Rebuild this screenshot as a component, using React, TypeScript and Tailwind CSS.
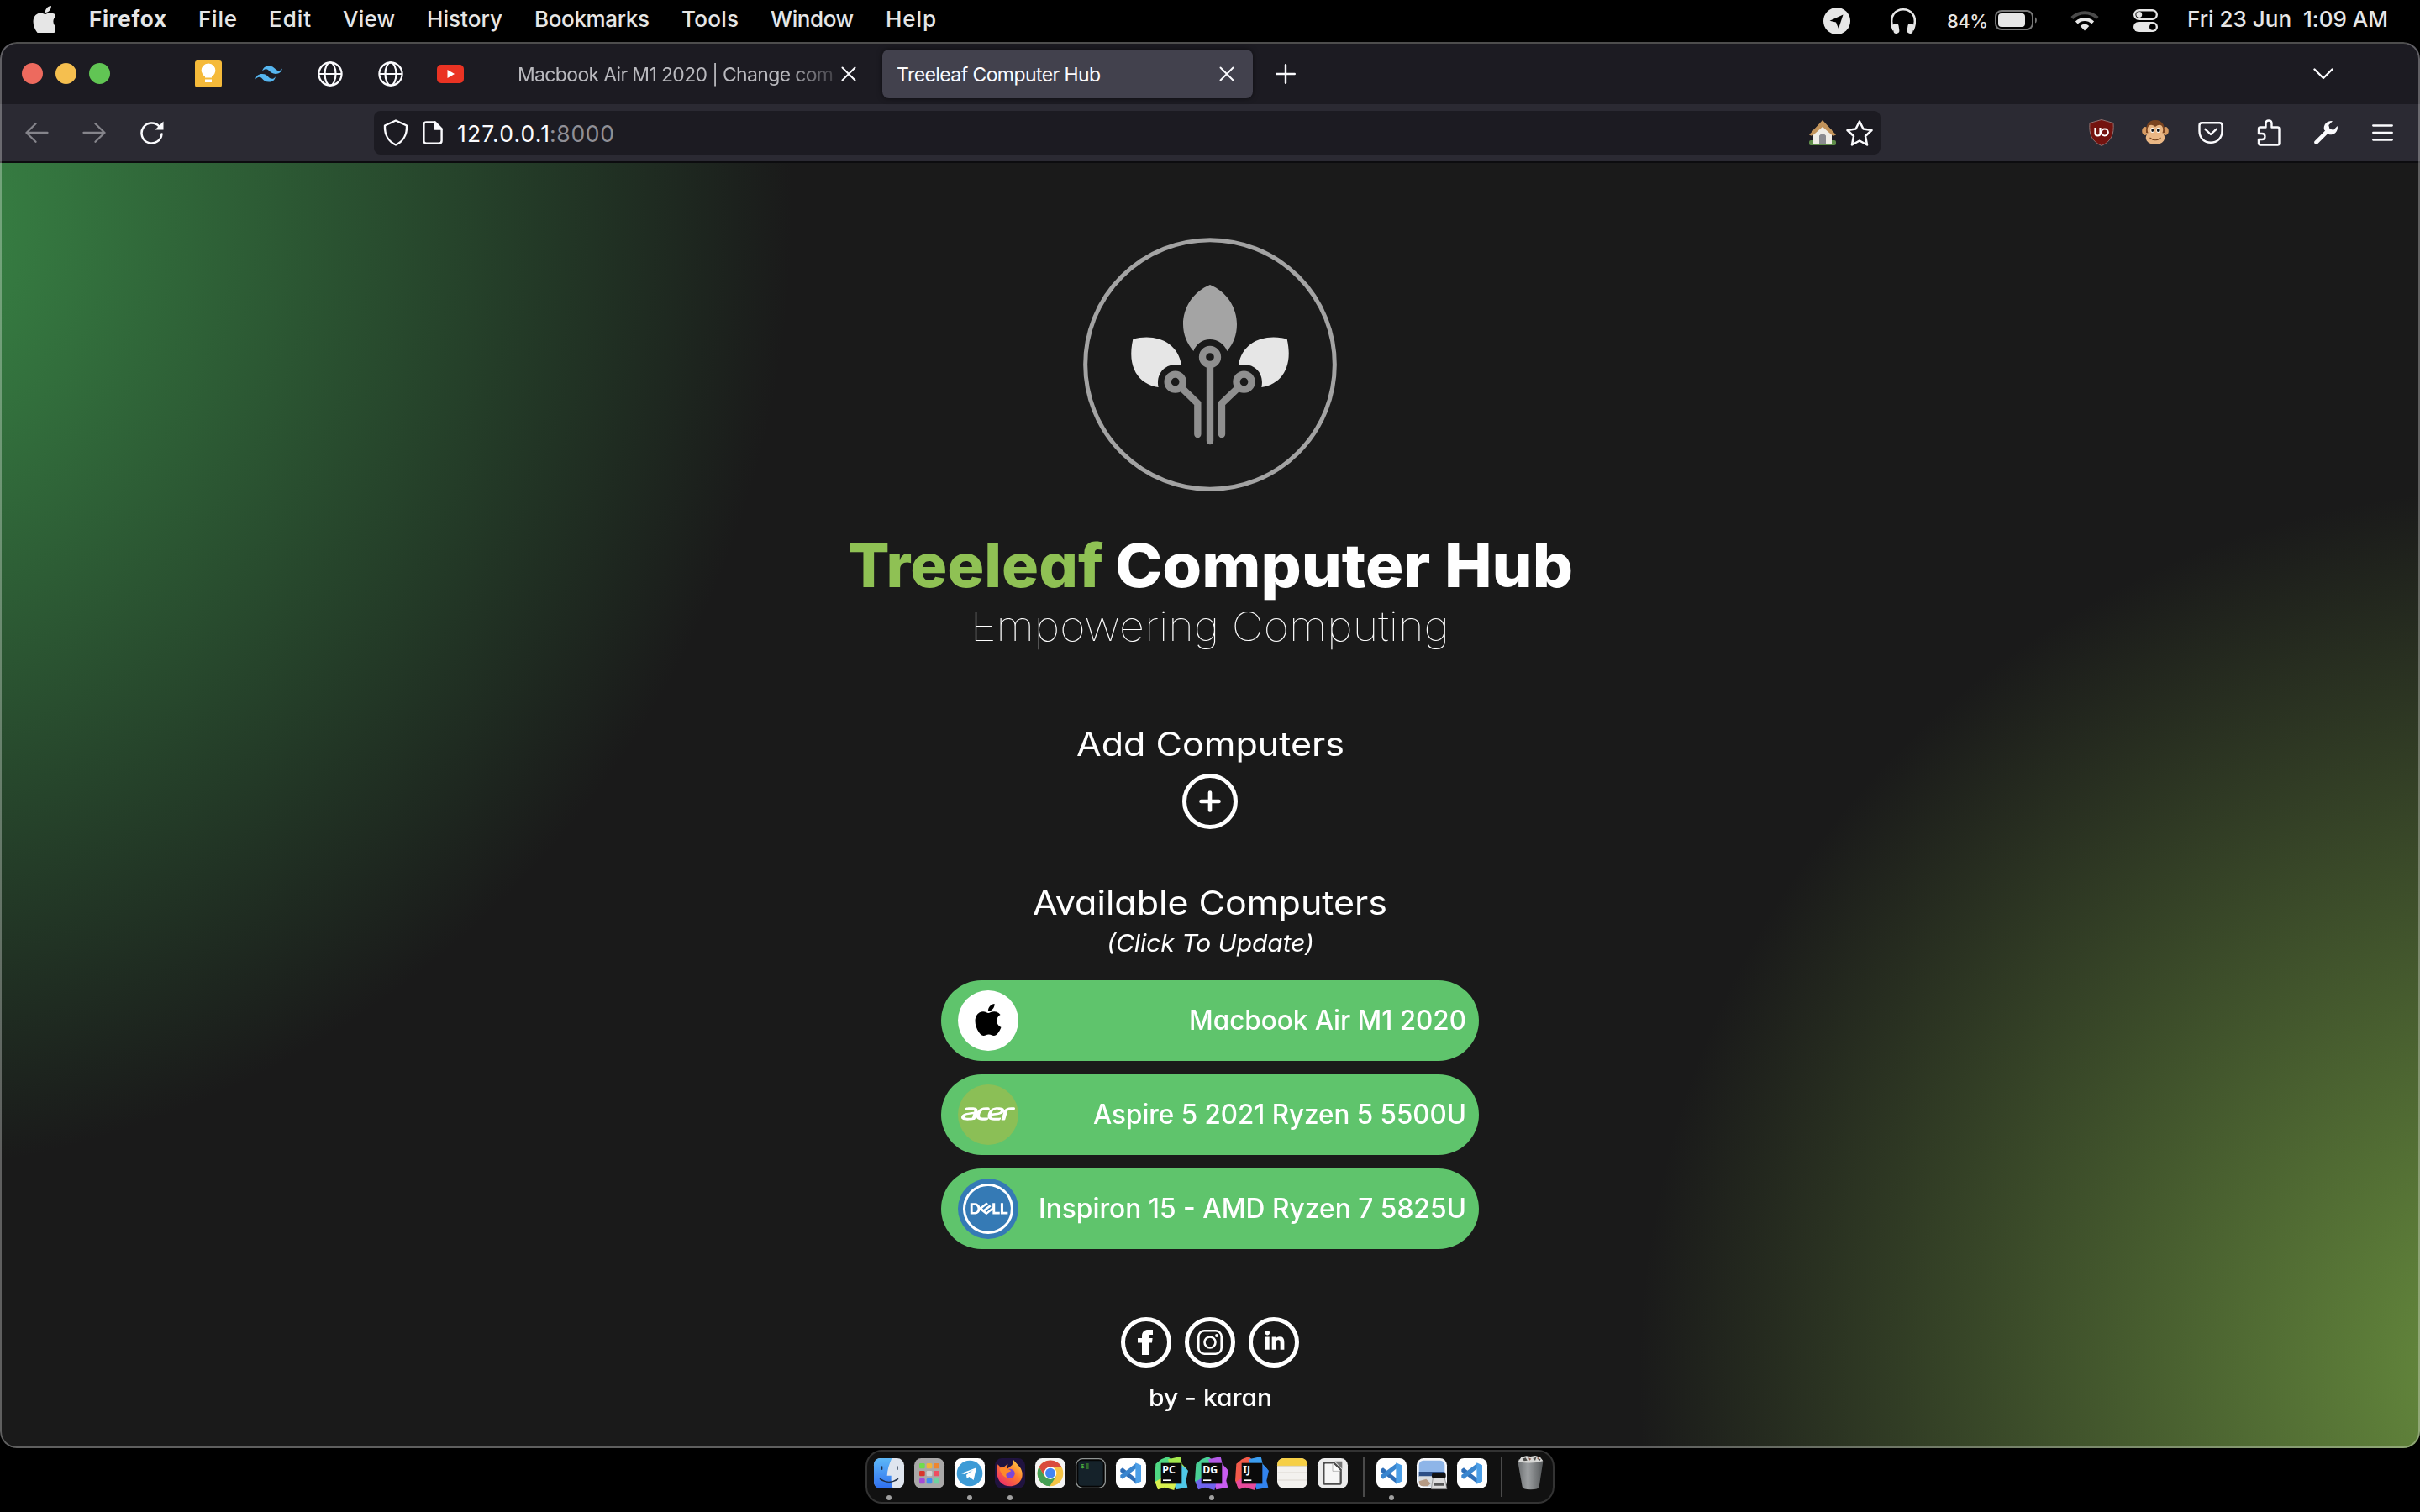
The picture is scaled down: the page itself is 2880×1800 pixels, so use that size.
import { useLayoutEffect, useRef, useState, type ReactNode } from "react";
import { SiAcer, SiApple, SiDell, SiTailwindcss } from "react-icons/si";
import { FaLinkedinIn } from "react-icons/fa";

/** Text whose tracking is adjusted so that it spans exactly `w` pixels. */
function Fit({ w, className = "", children }: { w: number; className?: string; children: string }) {
  const ref = useRef<HTMLSpanElement>(null);
  const [ls, setLs] = useState<number | null>(null);
  useLayoutEffect(() => {
    if (ref.current && ls === null) {
      const natural = ref.current.getBoundingClientRect().width;
      setLs((w - natural) / Math.max(1, children.length - 1));
    }
  }, [w, children, ls]);
  return (
    <span
      ref={ref}
      className={`inline-block whitespace-pre ${className}`}
      style={ls === null ? undefined : { letterSpacing: ls, marginRight: -ls }}
    >
      {children}
    </span>
  );
}

/** Text whose letterforms are widened so that it spans exactly `w` pixels. */
function Wide({ w, className = "", children }: { w: number; className?: string; children: string }) {
  const ref = useRef<HTMLSpanElement>(null);
  const [scale, setScale] = useState<number | null>(null);
  useLayoutEffect(() => {
    if (ref.current && scale === null) {
      setScale(w / ref.current.getBoundingClientRect().width);
    }
  }, [w, scale]);
  return (
    <span className={`block ${className}`} style={{ width: w }}>
      <span
        ref={ref}
        className="inline-block origin-left whitespace-pre"
        style={scale === null ? undefined : { transform: `scaleX(${scale})` }}
      >
        {children}
      </span>
    </span>
  );
}

const menus: [string, number][] = [
  ["File", 46],
  ["Edit", 50],
  ["View", 62],
  ["History", 90],
  ["Bookmarks", 137],
  ["Tools", 68],
  ["Window", 99],
  ["Help", 60],
];

function MenuBar() {
  return (
    <header className="flex h-[50px] items-start justify-between pl-[39px] pr-[38px] text-[26px] leading-[46px] text-[#e6e6e6]">
      <div className="flex h-[46px] items-center">
        <svg viewBox="2 0 20 24" preserveAspectRatio="none" className="mr-[40px] h-[32px] w-[27px] fill-current">
          <SiApple />
        </svg>
        <div className="flex gap-[38px]">
          <Fit w={92} className="font-bold">Firefox</Fit>
          {menus.map(([m, w]) => (
            <Fit key={m} w={w} className="font-medium">{m}</Fit>
          ))}
        </div>
      </div>
      <div className="flex h-[46px] items-center">
        <svg viewBox="0 0 32 32" className="mt-[3px] h-8 w-8">
          <circle cx="16" cy="16" r="16" fill="#e6e6e6" />
          <path d="M7.5 15.8 23.5 8.5 18 25 15 17.5Z" fill="#000" />
        </svg>
        <svg viewBox="0 0 30 32" className="ml-[48px] mt-[3px] h-8 w-[30px]">
          <path d="M3.5 27C-4 8 8 2.3 15 2.3S34 8 26.500 27" fill="none" stroke="#e6e6e6" strokeWidth="2.6" />
          <rect x="3" y="19" width="7" height="12" rx="3.3" fill="#e6e6e6" transform="rotate(-8 6 25)" />
          <rect x="20" y="19" width="7" height="12" rx="3.3" fill="#e6e6e6" transform="rotate(8 24 25)" />
        </svg>
        <Fit w={49} className="ml-[37px] mt-[3px] text-[22px] font-medium">84%</Fit>
        <svg viewBox="0 0 52 24" className="ml-[8px] mt-[2px] h-6 w-[52px]">
          <rect x="1" y="1" width="44" height="22" rx="7" fill="none" stroke="#777" strokeWidth="2" />
          <rect x="4" y="4" width="32" height="16" rx="4" fill="#e6e6e6" />
          <path d="M48 8.500C50.500 9.500 50.500 14.500 48 15.500Z" fill="#777" />
        </svg>
        <svg viewBox="0 0 34 25" className="ml-[38px] mt-[2px] h-[25px] w-[34px]" fill="none" strokeWidth="4">
          <path d="M1.800 9.500a21.500 21.500 0 0 1 30.400 0" stroke="#4a4a4a" />
          <path d="M7.300 15a13.700 13.700 0 0 1 19.400 0" stroke="#e6e6e6" />
          <path d="M17 24.500 11.700 19a7.500 7.500 0 0 1 10.600 0Z" fill="#e6e6e6" />
        </svg>
        <svg viewBox="0 0 29 27" className="ml-[41px] mt-[2px] h-[27px] w-[29px]">
          <rect x="1.200" y="1.200" width="26.600" height="10.600" rx="5.300" fill="none" stroke="#e6e6e6" strokeWidth="2.400" />
          <circle cx="6.800" cy="6.500" r="3.400" fill="#e6e6e6" />
          <rect y="15" width="29" height="12" rx="6" fill="#e6e6e6" />
          <circle cx="22.800" cy="21" r="3.800" fill="#000" />
        </svg>
        <Fit w={239} className="ml-[35px] font-medium">Fri 23 Jun  1:09 AM</Fit>
      </div>
    </header>
  );
}

function Globe() {
  return (
    <svg viewBox="0 0 30 30" className="h-[30px] w-[30px]" fill="none" stroke="#fbfbfe" strokeWidth="2.200">
      <circle cx="15" cy="15" r="13.600" />
      <ellipse cx="15" cy="15" rx="6.500" ry="13.600" />
      <path d="M1.500 15H28.500" />
    </svg>
  );
}

function Cross() {
  return (
    <svg viewBox="0 0 18 18" className="h-[18px] w-[18px] shrink-0" fill="none" stroke="#fbfbfe" strokeWidth="2" strokeLinecap="round">
      <path d="M1.500 1.500 16.500 16.500M16.500 1.500 1.500 16.500" />
    </svg>
  );
}

function TabStrip() {
  return (
    <div className="flex h-[72px] items-center bg-[#1c1b22] pl-[26px]">
      <div className="flex w-[206px] gap-[15px] pb-[2px]">
        <i className="h-[25px] w-[25px] rounded-full bg-[#ed6a5e]" />
        <i className="h-[25px] w-[25px] rounded-full bg-[#f5bf4f]" />
        <i className="h-[25px] w-[25px] rounded-full bg-[#61c554]" />
      </div>
      <div className="flex items-center">
        <svg viewBox="0 0 32 32" className="h-8 w-8">
          <rect width="32" height="32" rx="3" fill="#f5ba3a" />
          <path d="M12 20.500V19a8.300 8.300 0 1 1 8 0V20.500ZM12 22.500h8v3.500h-8Z" fill="#fff" />
        </svg>
        <SiTailwindcss className="ml-[40px] h-8 w-8 text-[#56b6f0]" />
        <div className="ml-[42px] flex gap-[42px]">
          <Globe />
          <Globe />
        </div>
        <svg viewBox="0 0 32 22" className="ml-[40px] h-[22px] w-8">
          <rect width="32" height="22" rx="5" fill="#ea3323" />
          <path d="M12.500 6 21 11 12.500 16Z" fill="#fff" />
        </svg>
      </div>
      <div className="ml-[64px] flex w-[403px] items-center">
        <div className="w-[379px] pt-[2px] text-[23px] leading-8 text-[#b9b9be] [mask-image:linear-gradient(to_right,#000_84%,#0003_100%)]">
          <Fit w={376}>Macbook Air M1 2020 | Change com</Fit>
        </div>
        <div className="ml-[6px]"><Cross /></div>
      </div>
      <div className="ml-[31px] flex h-[58px] w-[441px] items-center justify-between rounded-lg bg-[#42414d] pl-[17px] pr-[22px] shadow-[0_0_6px_#0008]">
        <Fit w={243} className="pt-[2px] text-[23px] leading-8 text-[#fbfbfe]">Treeleaf Computer Hub</Fit>
        <Cross />
      </div>
      <svg viewBox="0 0 24 24" className="ml-[27px] h-6 w-6" fill="none" stroke="#fbfbfe" strokeWidth="2.400" strokeLinecap="round">
        <path d="M12 1.200V22.800M1.200 12H22.800" />
      </svg>
      <svg viewBox="0 0 24 14" className="ml-auto mr-[103px] h-[14px] w-6" fill="none" stroke="#fbfbfe" strokeWidth="2.400" strokeLinecap="round" strokeLinejoin="round">
        <path d="M1.500 1.500 12 12 22.500 1.500" />
      </svg>
    </div>
  );
}

function Toolbar() {
  return (
    <div className="flex h-[68px] items-center bg-[#2b2a33] pl-[30px]">
      <svg viewBox="0 0 28 24" className="h-6 w-7" fill="none" stroke="#85848b" strokeWidth="2.300" strokeLinecap="round" strokeLinejoin="round">
        <path d="M12.500 1.200 1.500 12 12.500 22.800M1.500 12H26.500" />
      </svg>
      <svg viewBox="0 0 28 24" className="ml-[40px] h-6 w-7" fill="none" stroke="#85848b" strokeWidth="2.300" strokeLinecap="round" strokeLinejoin="round">
        <path d="M15.500 1.200 26.500 12 15.500 22.800M26.500 12H1.500" />
      </svg>
      <svg viewBox="0 0 30 30" className="ml-[40px] h-[30px] w-[30px]">
        <path d="M26.500 16.500A12 12 0 1 1 23.500 7.500" fill="none" stroke="#fbfbfe" strokeWidth="2.500" strokeLinecap="round" />
        <path d="M28.500 1.500V11.500H18.500Z" fill="#fbfbfe" />
      </svg>
      <div className="ml-[249px] flex h-[52px] w-[1793px] items-center rounded-lg bg-[#1c1b22] pl-[11px] pr-[9px]">
        <svg viewBox="0 0 30 32" className="h-8 w-[30px]" fill="none" stroke="#fbfbfe" strokeWidth="2.400" strokeLinejoin="round">
          <path d="M15 1.500 28 7.500C28.500 19 23 27 15 30.500 7 27 1.500 19 2 7.500Z" />
        </svg>
        <svg viewBox="0 0 24 28" className="ml-[17px] h-7 w-6" fill="none" stroke="#fbfbfe" strokeWidth="2.400" strokeLinejoin="round">
          <path d="M4.500 1.400H14.500L22.600 9.500V23.500Q22.600 26.600 19.500 26.600H4.500Q1.400 26.600 1.400 23.500V4.500Q1.400 1.400 4.500 1.400Z" />
          <path d="M14.500 1.400V9.500H22.600Z" fill="#fbfbfe" />
        </svg>
        <div className="ml-[17px] pt-px text-[26.500px] leading-10">
          <Fit w={110} className="text-[#fbfbfe]">127.0.0.1</Fit>
          <Fit w={77} className="text-[#8f8f96]">:8000</Fit>
        </div>
        <svg viewBox="0 0 32 31" className="ml-auto h-[31px] w-8">
          <rect y="24" width="32" height="6" rx="2" fill="#5f8d4a" />
          <path d="M5 12 16 3 27 12V28H5Z" fill="#efece6" />
          <path d="M0 17.500 16 0 32 17.500 28.500 19 16 8 3.500 19Z" fill="#c2935a" />
          <path d="M12 28V18.500Q16 14 20 18.500V28Z" fill="#8b8b90" />
        </svg>
        <svg viewBox="0 0 32 31" className="ml-[12px] h-[31px] w-8" fill="none" stroke="#fbfbfe" strokeWidth="2.500" strokeLinejoin="round">
          <path d="M16 1.500 20.500 10.500 30.500 12 23 19 25 29.500 16 24.500 7 29.500 9 19 1.500 12 11.500 10.500Z" />
        </svg>
      </div>
      <div className="ml-auto mr-[32px] flex items-center">
        <svg viewBox="0 0 30 32" className="h-8 w-[30px]">
          <path d="M15 .5 29 4.500C30 18 27 26 15 31.500 3 26 0 18 1 4.500Z" fill="#74130f" stroke="#92706f" strokeWidth="1" />
          <path d="M7.500 10V16.500Q7.500 19.500 10.500 19.500 13.500 19.500 13.500 16.500V10" fill="none" stroke="#fff" strokeWidth="2.200" />
          <circle cx="18.800" cy="15.500" r="4" fill="none" stroke="#fff" strokeWidth="2.200" />
        </svg>
        <svg viewBox="0 0 32 30" className="ml-[33px] h-[30px] w-8">
          <ellipse cx="3.800" cy="13" rx="3.600" ry="5" fill="#d79b62" />
          <ellipse cx="28.200" cy="13" rx="3.600" ry="5" fill="#d79b62" />
          <path d="M16 0C7 0 4.500 7 5 15H27C27.500 7 25 0 16 0Z" fill="#7a4420" />
          <path d="M16 8C9 2 5 9 7.500 15 1 22 7 29 16 29S31 22 24.500 15C27 9 23 2 16 8Z" fill="#eab785" />
          <ellipse cx="12.500" cy="12" rx="2.200" ry="3" fill="#fff" />
          <ellipse cx="19.500" cy="12" rx="2.200" ry="3" fill="#fff" />
          <ellipse cx="12.700" cy="12" rx="1.400" ry="2.100" fill="#111" />
          <ellipse cx="19.300" cy="12" rx="1.400" ry="2.100" fill="#111" />
          <path d="M9.500 21Q16 26.500 22.500 21" fill="none" stroke="#77451f" strokeWidth="1.200" />
        </svg>
        <svg viewBox="0 0 30 26" className="ml-[35px] h-[26px] w-[30px]" fill="none" stroke="#fbfbfe" strokeWidth="2.400" strokeLinecap="round" strokeLinejoin="round">
          <path d="M4.500 1.300H25.500Q28.500 1.300 28.500 4.500V11C28.500 19.500 22.500 24.700 15 24.700S1.500 19.500 1.500 11V4.500Q1.500 1.300 4.500 1.300Z" />
          <path d="M8.500 8.800 15 15 21.500 8.800" />
        </svg>
        <svg viewBox="0 0 28 32" className="ml-[40px] h-8 w-7" fill="none" stroke="#fbfbfe" strokeWidth="2.400" strokeLinejoin="round">
          <path d="M2 17V11.500Q2 9.500 4 9.500H10.500V5Q10.500 1.500 14 1.500T17.500 5V9.500H24.500Q26.500 9.500 26.500 11.500V28.500Q26.500 30.500 24.500 30.500H4Q2 30.500 2 28.500V24H6Q9.500 24 9.500 20.500T6 17Z" />
        </svg>
        <svg viewBox="0 0 28 28" className="ml-[40px] h-7 w-7">
          <path d="M2.500 25.500 16 12" stroke="#fbfbfe" strokeWidth="4.600" strokeLinecap="round" />
          <path d="M22 .3A8.300 8.300 0 0 0 12 10.500L17.500 16A8.300 8.300 0 0 0 27.700 6L23 10.700 18.500 9.500 17.300 5Z" fill="#fbfbfe" />
        </svg>
        <svg viewBox="0 0 25 20" className="ml-[41px] h-5 w-[25px]" stroke="#fbfbfe" strokeWidth="2.300" strokeLinecap="round">
          <path d="M1.200 1.500H23.800M1.200 10H23.800M1.200 18.500H23.800" />
        </svg>
      </div>
    </div>
  );
}

function TreeleafLogo() {
  return (
    <svg viewBox="87 69 906 906" className="h-[302px] w-[302px]">
      <circle cx="540" cy="522" r="445" fill="none" stroke="#a3a3a3" strokeWidth="15" />
      <path d="M540 237C480 262 444 318 444 378 444 415 458 447 481 474 490 450 512 432 540 432S592 450 601 474C624 447 636 415 636 378 636 318 600 262 540 237Z" fill="#a4a4a4" />
      <path id="leaf" d="M265 431C345 410 425 440 438 524 385 512 345 550 356 603 285 592 242 532 265 431Z" fill="#e6e6e6" />
      <use href="#leaf" transform="translate(1080 0) scale(-1 1)" />
      <g fill="none" stroke="#8f8f8f" strokeWidth="25" strokeLinecap="round">
        <circle cx="540" cy="495" r="27" />
        <circle cx="416" cy="584" r="27" />
        <circle cx="661.500" cy="584" r="27" />
        <path d="M540 530V795M442 608 496 661V771M637 608 582 661V771" />
      </g>
    </svg>
  );
}

const computers: { name: string; w: number; logo: ReactNode }[] = [
  {
    name: "Macbook Air M1 2020",
    w: 330,
    logo: (
      <span className="flex h-full w-full items-center justify-center rounded-full bg-white pb-[3px]">
        <SiApple className="h-[38px] w-[38px] text-black" />
      </span>
    ),
  },
  {
    name: "Aspire 5 2021 Ryzen 5 5500U",
    w: 444,
    logo: (
      <span className="flex h-full w-full items-center justify-center rounded-full bg-[#8bbf56] pb-[2px]">
        <SiAcer className="h-[64px] w-[64px] text-white" />
      </span>
    ),
  },
  {
    name: "Inspiron 15 - AMD Ryzen 7 5825U",
    w: 509,
    logo: (
      <span className="flex h-full w-full items-center justify-center rounded-full bg-[#357ab5]">
        <SiDell className="h-[60px] w-[60px] text-white" />
      </span>
    ),
  },
];

function Page() {
  return (
    <main className="flex h-[1530px] flex-col items-center bg-[#1a1a1a] bg-[radial-gradient(circle_1153px_at_-209px_56px,#3c914a,#3c914a00),radial-gradient(circle_1060px_at_3010px_1446px,#6a913f,#6a913f00)] pt-[89px] text-white [font-feature-settings:'cv11']">
      <TreeleafLogo />
      <h1 className="mt-[48px] flex gap-[14px] text-[72px] font-extrabold leading-[80px]">
        <Wide w={304} className="text-[#8fc154]">Treeleaf</Wide>
        <Wide w={545}>Computer Hub</Wide>
      </h1>
      <p className="mt-[5px] text-[48px] font-thin leading-[56px]">
        <Wide w={570}>Empowering Computing</Wide>
      </p>
      <h2 className="mt-[88px] text-[39px] leading-[48px]">
        <Wide w={319}>Add Computers</Wide>
      </h2>
      <button className="mt-[11px] h-[66px] w-[66px] shrink-0">
        <svg viewBox="0 0 66 66" fill="none" stroke="#fff" strokeLinecap="round">
          <circle cx="33" cy="33" r="30.500" strokeWidth="5" />
          <path d="M33 22.500V43.500M22.500 33H43.500" strokeWidth="4.600" />
        </svg>
      </button>
      <h2 className="mt-[64px] text-[39px] leading-[48px]">
        <Wide w={422}>Available Computers</Wide>
      </h2>
      <p className="mt-[8px] text-[28px] font-[450] italic leading-8">
        <Wide w={247}>(Click To Update)</Wide>
      </p>
      <ul className="mt-[28px] flex w-[640px] flex-col gap-4">
        {computers.map((c) => (
          <li key={c.name} className="flex h-24 items-center justify-between rounded-full bg-[#5fc46c] pl-5 pr-[15px] text-[32px] font-[450] leading-[48px]">
            <span className="h-[72px] w-[72px]">{c.logo}</span>
            <Wide w={c.w}>{c.name}</Wide>
          </li>
        ))}
      </ul>
      <div className="mt-[81px] flex gap-4">
        <a className="flex h-[60px] w-[60px] items-center justify-center rounded-full border-[5px] border-white">
          <svg viewBox="0 0 18 30" className="mr-[2px] h-[30px] w-[18px]" fill="#fff">
            <path d="M5 30V15.500H0V10H5V7.500C5 2.500 8 0 12.500 0H18V6H15C13.500 6 13 6.800 13 8V10H17.600L17 15.500H13V30Z" />
          </svg>
        </a>
        <a className="flex h-[60px] w-[60px] items-center justify-center rounded-full border-[5px] border-white">
          <svg viewBox="0 0 30 30" className="h-[30px] w-[30px]" fill="none" stroke="#fff" strokeWidth="2.600">
            <rect x="1.300" y="1.300" width="27.400" height="27.400" rx="7" />
            <circle cx="15" cy="15" r="6.500" />
            <circle cx="23" cy="7" r="1.900" fill="#fff" stroke="none" />
          </svg>
        </a>
        <a className="flex h-[60px] w-[60px] items-center justify-center rounded-full border-[5px] border-white pb-[3px] pl-[2px]">
          <FaLinkedinIn className="h-[26px] w-[24px]" />
        </a>
      </div>
      <p className="mt-[20px] text-[28.500px] font-[450] leading-8">
        <Wide w={147}>by - karan</Wide>
      </p>
    </main>
  );
}

function DockIcon({ children, running = false }: { children: ReactNode; running?: boolean }) {
  return (
    <div className="flex h-[60px] w-9 flex-col items-center pt-2">
      <svg viewBox="0 0 108 108" className="h-9 w-9 shrink-0 overflow-visible">{children}</svg>
      {running && <i className="mt-2 h-[6px] w-[6px] shrink-0 rounded-full bg-[#a0a0a0]" />}
    </div>
  );
}

function Tile({ fill }: { fill: string }) {
  return <rect width="108" height="108" rx="25" fill={fill} />;
}

function VSCode() {
  return (
    <>
      <Tile fill="#fff" />
      <path d="M16 40 24 34 72 72V90L16 48Z" fill="#2f6fb8" />
      <path d="M16 68 24 74 72 37V18L16 60Z" fill="#3a86cf" />
      <path d="M70 16 90 25V83L70 92Z" fill="#4b9fe8" />
    </>
  );
}

function JetBrains({ label, a, b, c, d }: { label: string; a: string; b: string; c: string; d: string }) {
  return (
    <>
      <path d="M-2 20 18 4 42 -6 60 10 70 60 40 100 6 108 -6 80Z" fill={a} />
      <path d="M42 4 86 -6 92 20 110 40 100 70 60 60Z" fill={b} />
      <path d="M90 24 114 44 106 80 112 104 70 112 60 80Z" fill={c} />
      <path d="M-4 84 20 70 70 90 64 114 30 104 6 112Z" fill={d} />
      <rect x="17" y="17" width="74" height="74" fill="#0a0a0a" />
      <text x="22" y="54" fontSize="37" fontWeight="700" fill="#fff" fontFamily="'Noto Sans', sans-serif">{label}</text>
      <rect x="24" y="76" width="28" height="5" fill="#fff" />
    </>
  );
}

const launchpad = ["#6fdc4c", "#f2b43b", "#ee8630", "#d9352b", "#a8a8a8", "#ef4d60", "#a64ad6", "#3f8cf0", "#6ed3a0"];

function Dock() {
  return (
    <footer className="flex justify-center pt-[2px]">
      <div className="flex h-16 w-[820px] rounded-[20px] border-2 border-[#333] bg-[#111] pl-2">
        <div className="flex gap-3">
          <DockIcon running>
            <Tile fill="#dfe5ee" />
            <path d="M25 0H64C54 22 48 42 47 62H62C61 80 63 96 68 108H25Q0 108 0 83V25Q0 0 25 0Z" fill="url(#finder)" />
            <path d="M29 30V40M84 30V40M22 74Q54 96 86 74" fill="none" stroke="#1f2d44" strokeWidth="4" strokeLinecap="round" />
            <defs>
              <linearGradient id="finder" x2="0" y2="1">
                <stop stopColor="#5db8f7" />
                <stop offset="1" stopColor="#2f6ff0" />
              </linearGradient>
            </defs>
          </DockIcon>
          <DockIcon>
            <Tile fill="#a9a8a8" />
            {launchpad.map((color, i) => (
              <rect key={color} x={18 + (i % 3) * 26} y={18 + Math.floor(i / 3) * 27} width="20" height="19" rx="4" fill={i === 4 ? "#d0d0d0" : color} />
            ))}
          </DockIcon>
          <DockIcon running>
            <Tile fill="#fff" />
            <circle cx="54" cy="54" r="46" fill="#3d9bd6" />
            <path d="M24 54 78 34 68 78 52 66 44 73 42 59 66 42 36 57Z" fill="#fff" />
          </DockIcon>
          <DockIcon running>
            <Tile fill="#20133f" />
            <path d="M10 22 18 30 34 30 46 20 44 38 62 24 66 6 84 26C98 38 102 60 94 76 84 94 70 100 54 100 28 100 8 80 8 54 8 40 8 30 10 22Z" fill="url(#fox)" />
            <circle cx="54" cy="55" r="17" fill="#7b48d8" />
            <path d="M16 38Q30 30 46 38 56 42 58 46L44 52Q36 60 44 70 26 66 16 38Z" fill="#ff8a2a" />
            <defs>
              <linearGradient id="fox" x1="1" y1="0" x2="0.200" y2="1">
                <stop stopColor="#ffe24a" />
                <stop offset="0.500" stopColor="#ff7a2e" />
                <stop offset="1" stopColor="#ec2a6b" />
              </linearGradient>
            </defs>
          </DockIcon>
          <DockIcon>
            <Tile fill="#f4f4f4" />
            <circle cx="54" cy="54" r="46" fill="#f6c445" />
            <path d="M14 31A46 46 0 0 0 52 100L74 65 54 54 34 65Z" fill="#45a055" />
            <path d="M14 31A46 46 0 0 1 94 31H54L34 65Z" fill="#d94b3d" />
            <circle cx="54" cy="53" r="22" fill="#fff" />
            <circle cx="54" cy="53" r="18" fill="#4285f4" />
          </DockIcon>
          <DockIcon>
            <Tile fill="#8f9493" />
            <rect x="4" y="4" width="100" height="100" rx="21" fill="#050505" />
            <rect x="10" y="10" width="88" height="88" rx="12" fill="#15222a" />
            <text x="17" y="37" fontSize="24" fill="#4fc942" fontFamily="'Liberation Mono', monospace">$</text>
            <rect x="36" y="18" width="11" height="21" fill="#2f6b2b" />
          </DockIcon>
          <DockIcon><VSCode /></DockIcon>
          <DockIcon><JetBrains label="PC" a="#4fd884" b="#a5e84c" c="#4fc8e8" d="#d8f04e" /></DockIcon>
          <DockIcon running><JetBrains label="DG" a="#49cf96" b="#b45ae8" c="#c85cf0" d="#6f63ee" /></DockIcon>
          <DockIcon><JetBrains label="IJ" a="#f25a4a" b="#3b9df0" c="#3283ee" d="#e84a9c" /></DockIcon>
          <DockIcon>
            <Tile fill="#f3f1ee" />
            <path d="M0 28V25Q0 0 25 0H83Q108 0 108 25V28Z" fill="#f6cf45" />
            <path d="M0 28H108M2 51H106M2 78H106" stroke="#cfcac2" strokeWidth="2" />
          </DockIcon>
          <DockIcon>
            <Tile fill="#ececec" />
            <path d="M28 16H58L83 41V86Q83 92 77 92H28Q22 92 22 86V22Q22 16 28 16Z" fill="#f6f6f6" stroke="#4d4d4d" strokeWidth="7" />
            <path d="M54 18V46H82" fill="#fff" stroke="#999" strokeWidth="2" />
            <path d="M62 11H88V38Z" fill="#777" />
          </DockIcon>
        </div>
        <i className="ml-[18px] mt-[6px] h-12 w-[2px] bg-[#4a4a4a]" />
        <div className="ml-[14px] flex gap-3">
          <DockIcon running><VSCode /></DockIcon>
          <DockIcon>
            <Tile fill="#f6f7fa" />
            <rect x="8" y="8" width="92" height="92" rx="16" fill="#8eb5e8" />
            <rect x="8" y="48" width="92" height="18" fill="#2d4f86" />
            <path d="M8 64H100V84Q100 100 84 100H24Q8 100 8 84Z" fill="#d9dde0" />
            <path d="M8 82 34 74 50 90 40 100H24Q8 100 8 84Z" fill="#b59a84" />
            <path d="M58 70 52 110H108L100 70Z" fill="#dcdcdc" stroke="#777" strokeWidth="2" />
            <path d="M62 88H96L98 98H60Z" fill="#555" />
            <rect x="54" y="52" width="50" height="20" rx="7" fill="#111" />
          </DockIcon>
          <DockIcon><VSCode /></DockIcon>
        </div>
        <i className="ml-[16px] mt-[6px] h-12 w-[2px] bg-[#4a4a4a]" />
        <div className="ml-[17px]">
          <DockIcon>
            <path d="M8 4 90 4 94 12 80 102Q78 112 50 112T20 102L4 12Z" fill="url(#bin)" />
            <path d="M6 12 16 -4 34 -8 50 -6 66 -9 84 -4 94 10Q50 22 6 12Z" fill="#d8d8d6" />
            <path d="M20 2 32 -2 38 8 26 10ZM58 0 70 -4 66 9ZM76 4 86 2 82 10Z" fill="#4a4a48" />
            <path d="M42 -2 52 2 46 8ZM72 0 78 -3 78 5Z" fill="#8a5a4a" />
            <defs>
              <linearGradient id="bin">
                <stop stopColor="#6b6e70" />
                <stop offset="0.400" stopColor="#9da0a2" />
                <stop offset="1" stopColor="#55585a" />
              </linearGradient>
            </defs>
          </DockIcon>
        </div>
      </div>
    </footer>
  );
}

export default function App() {
  return (
    <div className="h-[1800px] w-[2880px] overflow-hidden bg-black font-['Inter',sans-serif]">
      <MenuBar />
      <div className="relative h-[1674px] overflow-hidden rounded-[20px] pt-[2px]">
        <TabStrip />
        <Toolbar />
        <div className="h-[2px] bg-[#0c0c0f]" />
        <Page />
        <div className="pointer-events-none absolute inset-0 rounded-[20px] border-2 border-white/30" />
      </div>
      <Dock />
    </div>
  );
}
